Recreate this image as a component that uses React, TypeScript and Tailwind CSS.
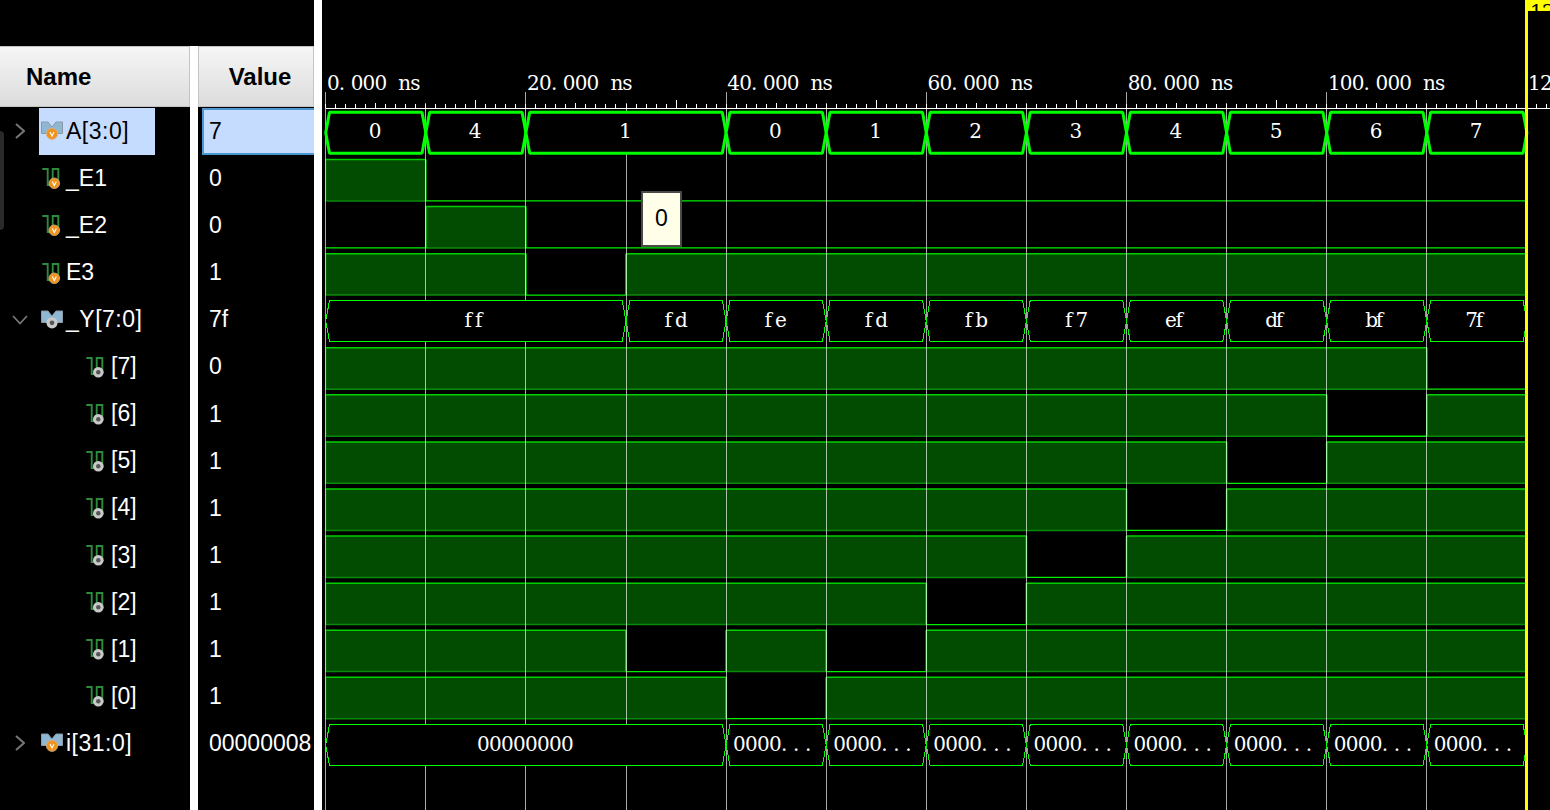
import React from "react";

const SANS = "font-['Liberation_Sans',Arial,sans-serif]";
const X = (t: number) => 325.7 + 10.01 * t;
const GX = (t: number) => Math.floor(X(t)) + 0.5;
const MONO = "'DejaVu Serif','Liberation Serif',serif";

function MonoText({ x, y, text, adv = 11.9, size = 20, center = false, fill = "#fff" }: { x: number; y: number; text: string; adv?: number; size?: number; center?: boolean; fill?: string }) {
  const start = center ? x - (text.length * adv) / 2 : x;
  const xs = Array.from(text).map((_, i) => (start + i * adv).toFixed(1)).join(" ");
  return (
    <text x={xs} y={y} fill={fill} fontSize={size} fontFamily={MONO}>
      {text}
    </text>
  );
}

function Bus({ top, h, segs, width, labelAdv = 12, crisp = false }: { top: number; h: number; segs: [number, number, string][]; width: number; labelAdv?: number; crisp?: boolean }) {
  const mid = top + h / 2;
  return (
    <g>
      {segs.map(([a, b, label]) => {
        const x0 = X(a);
        const x1 = X(b);
        const pts = [
          [x0, mid],
          [x0 + 3.8, top],
          [x1 - 3.8, top],
          [x1, mid],
          [x1 - 3.8, top + h],
          [x0 + 3.8, top + h],
        ]
          .map((p) => p.join(","))
          .join(" ");
        return (
          <g key={a}>
            <polygon
              points={pts}
              fill="#000"
              stroke="#00ff00"
              strokeWidth={width}
              strokeLinejoin="bevel"
              shapeRendering={crisp ? "crispEdges" : undefined}
            />
            <MonoText x={(x0 + x1) / 2 - 1} y={mid + 5.5} text={label} center adv={labelAdv} />
          </g>
        );
      })}
    </g>
  );
}

function Wire({ top, lows }: { top: number; lows: [number, number][] }) {
  const h = 41.4;
  const bottom = top + h;
  const isLow = (t: number) => lows.some(([a, b]) => t >= a && t < b);
  const edges = [0, ...lows.flat(), 120].filter((v, i, arr) => arr.indexOf(v) === i).sort((a, b) => a - b);
  const parts = edges.slice(0, -1).map((a, i) => ({ a, b: edges[i + 1], low: isLow(a) }));
  return (
    <g>
      {parts.map((p) =>
        p.low ? (
          <line key={p.a} x1={X(p.a)} x2={X(p.b)} y1={bottom} y2={bottom} stroke="#00f000" strokeWidth={1.3} />
        ) : (
          <g key={p.a}>
            <rect x={X(p.a)} y={top} width={X(p.b) - X(p.a)} height={h} fill="#024c02" />
            <line x1={X(p.a)} x2={X(p.b)} y1={top} y2={top} stroke="#00d000" strokeWidth={1.5} />
            <line x1={X(p.a)} x2={X(p.b)} y1={bottom} y2={bottom} stroke="#0a8a0a" strokeWidth={1.5} />
          </g>
        )
      )}
      {edges
        .filter((t) => t > 0 && t < 120)
        .map((t) => (
          <line key={t} x1={X(t)} x2={X(t)} y1={top} y2={bottom} stroke="#00f000" strokeWidth={1.5} />
        ))}
      {!isLow(0) && <line x1={X(0)} x2={X(0)} y1={top} y2={bottom} stroke="#089008" strokeWidth={1.3} />}
    </g>
  );
}

const wireRows: { idx: number; lows: [number, number][] }[] = [
  { idx: 1, lows: [[10, 120]] },
  { idx: 2, lows: [[0, 10], [20, 120]] },
  { idx: 3, lows: [[20, 30]] },
  { idx: 5, lows: [[110, 120]] },
  { idx: 6, lows: [[100, 110]] },
  { idx: 7, lows: [[90, 100]] },
  { idx: 8, lows: [[80, 90]] },
  { idx: 9, lows: [[70, 80]] },
  { idx: 10, lows: [[60, 70]] },
  { idx: 11, lows: [[30, 40], [50, 60]] },
  { idx: 12, lows: [[40, 50]] },
];

const tops = (i: number) => 159.5 + 47.07 * (i - 1);

function seq(vals: string[], from = 40): [number, number, string][] {
  return vals.map((v, i) => [from + i * 10, from + (i + 1) * 10, v]);
}

function WavePanel() {
  const ticks = Array.from({ length: 123 }, (_, i) => i);
  const grid = Array.from({ length: 13 }, (_, i) => i * 10);
  const labels = [0, 20, 40, 60, 80, 100];
  return (
    <svg viewBox="322 0 1228 810" className="h-[810px] w-[1228px] shrink-0 bg-black">
      {wireRows.map((r) => (
        <Wire key={r.idx} top={tops(r.idx)} lows={r.lows} />
      ))}
      {grid.map((t) => (
        <line
          key={t}
          x1={GX(t)}
          x2={GX(t)}
          y1={t % 20 === 0 ? 92 : 103}
          y2={810}
          stroke="#fff"
          strokeOpacity={0.66}
          strokeWidth={1}
        />
      ))}
      <Bus
        top={112.3}
        h={41}
        width={3}
        segs={[
          [0, 10, "0"],
          [10, 20, "4"],
          [20, 40, "1"],
          ...seq(["0", "1", "2", "3", "4", "5", "6", "7"]),
        ]}
      />
      <Bus
        top={300.5}
        h={41}
        width={1}
        crisp
        segs={[
          [0, 30, "ff"],
          [30, 40, "fd"],
          ...seq(["fe", "fd", "fb", "f7", "ef", "df", "bf", "7f"]),
        ]}
        labelAdv={10.5}
      />
      <Bus
        top={724.5}
        h={41}
        width={1}
        crisp
        segs={[[0, 40, "00000000"], ...seq(Array(8).fill("0000..."))]}
      />
      <line x1={325.7} x2={1550} y1={108.5} y2={108.5} stroke="#fff" strokeWidth={1} />
      {ticks.map((t) => (
        <line
          key={t}
          x1={GX(t)}
          x2={GX(t)}
          y1={t % 10 === 5 ? (t % 20 === 15 ? 100 : 103) : 104}
          y2={108}
          stroke="#fff"
          strokeWidth={1}
        />
      ))}
      {labels.map((t) => (
        <MonoText key={t} x={X(t) + 1.2} y={90} text={`${t}.000 ns`} />
      ))}
      <MonoText x={X(120) + 1.2} y={90} text="12" />
      <rect x={1525} y={0} width={3} height={810} fill="#ffff00" />
      <svg x={1526} y={0} width={24} height={11}>
        <rect x={0} y={0} width={24} height={11} fill="#ffff00" />
        <MonoText x={4} y={19} text="12" fill="#000" />
      </svg>
    </svg>
  );
}

function Dot({ kind, cx, cy, r }: { kind: "v" | "g"; cx: number; cy: number; r: number }) {
  if (kind === "v") {
    return (
      <g>
        <circle cx={cx} cy={cy} r={r} fill="#f0921e" stroke="#d9b184" strokeWidth={0.8} />
        <path d={`M${cx - 2} ${cy - 1.8} L${cx} ${cy + 2.2} L${cx + 2} ${cy - 1.8}`} fill="none" stroke="#fff" strokeWidth={1.1} />
      </g>
    );
  }
  return (
    <g>
      <circle cx={cx} cy={cy} r={r} fill="#c9c9c9" />
      <circle cx={cx} cy={cy} r={r * 0.42} fill="#555" />
    </g>
  );
}

function BusIcon({ kind }: { kind: "v" | "g" }) {
  return (
    <svg width="22" height="20" viewBox="0 0 22 20" className="shrink-0">
      <path d="M0.5 1 H7 L10.8 6 L15 1 H21.5 V12.5 H0.5 Z" fill="#8fb7d2" stroke="#8a9aa6" strokeWidth={1} />
      <Dot kind={kind} cx={11} cy={12.8} r={5.6} />
    </svg>
  );
}

function WireIcon({ kind }: { kind: "v" | "g" }) {
  return (
    <svg width="22" height="22" viewBox="0 0 22 22" className="shrink-0">
      <path d="M1.3 2 H6.7 V18 H11.7 V2 H17.3 V18" fill="none" stroke="#2e8b3c" strokeWidth={1.9} />
      <Dot kind={kind} cx={13.3} cy={16.3} r={5.3} />
    </svg>
  );
}

function Chevron({ open }: { open?: boolean }) {
  return open ? (
    <svg width="16" height="10" viewBox="0 0 16 10" className="shrink-0">
      <path d="M1 1 L8 8.5 L15 1" fill="none" stroke="#777" strokeWidth={1.8} />
    </svg>
  ) : (
    <svg width="10" height="16" viewBox="0 0 10 16" className="shrink-0">
      <path d="M1 1 L9 8 L1 15" fill="none" stroke="#777" strokeWidth={2} />
    </svg>
  );
}

const rowClass = "flex h-[47.08px] items-center";

function NameRow({ label, kind, type, chevron, selected }: { label: string; kind: "v" | "g"; type: "bus" | "wire"; chevron?: "open" | "closed"; selected?: boolean }) {
  const sub = label.startsWith("[");
  const long = label.includes(":");
  return (
    <div className={rowClass}>
      <div className={`flex shrink-0 items-center ${sub ? "w-[83px]" : "w-[39px]"} ${chevron === "open" ? "pl-[12px]" : "pl-[15px]"}`}>
        {chevron && <Chevron open={chevron === "open"} />}
      </div>
      <div className={`flex h-full items-center ${selected ? "w-[116px] bg-[#c6dcff] text-black" : "text-white"}`}>
        <div className={`ml-[2px] flex w-[22px] shrink-0 items-center justify-center ${sub ? "mr-[4px]" : "mr-[3px]"}`}>
          {type === "bus" ? <BusIcon kind={kind} /> : <WireIcon kind={kind} />}
        </div>
        <span className={`whitespace-pre leading-none ${long ? "tracking-[0.5px]" : ""}`}>{label}</span>
      </div>
    </div>
  );
}

const names: { label: string; value: string; kind: "v" | "g"; type: "bus" | "wire"; chevron?: "open" | "closed" }[] = [
  { label: "A[3:0]", value: "7", kind: "v", type: "bus", chevron: "closed" },
  { label: "_E1", value: "0", kind: "v", type: "wire" },
  { label: "_E2", value: "0", kind: "v", type: "wire" },
  { label: "E3", value: "1", kind: "v", type: "wire" },
  { label: "_Y[7:0]", value: "7f", kind: "g", type: "bus", chevron: "open" },
  { label: "[7]", value: "0", kind: "g", type: "wire" },
  { label: "[6]", value: "1", kind: "g", type: "wire" },
  { label: "[5]", value: "1", kind: "g", type: "wire" },
  { label: "[4]", value: "1", kind: "g", type: "wire" },
  { label: "[3]", value: "1", kind: "g", type: "wire" },
  { label: "[2]", value: "1", kind: "g", type: "wire" },
  { label: "[1]", value: "1", kind: "g", type: "wire" },
  { label: "[0]", value: "1", kind: "g", type: "wire" },
  { label: "i[31:0]", value: "00000008", kind: "v", type: "bus", chevron: "closed" },
];

const headerClass =
  "flex h-[61px] items-center border border-[#c4c4c4] bg-gradient-to-b from-[#f6f6f6] to-[#dcdcdc] pt-[1px] text-[24px] font-bold text-black";

export default function App() {
  return (
    <div className={`relative flex h-[810px] w-[1550px] overflow-hidden bg-black text-[23px] ${SANS}`}>
      <div className="w-[190px] shrink-0 pt-[46px]">
        <div className={`${headerClass} border-l-0 pl-[26px]`}>Name</div>
        <div className="pt-[0.8px]">
          {names.map((n, i) => (
            <NameRow key={n.label} label={n.label} kind={n.kind} type={n.type} chevron={n.chevron} selected={i === 0} />
          ))}
        </div>
      </div>
      <div className="mt-[46px] w-[8px] shrink-0 bg-white" />
      <div className="w-[116px] shrink-0 pt-[46px]">
        <div className={`${headerClass} justify-center pl-[8px]`}>Value</div>
        <div className="pt-[0.8px]">
          {names.map((n, i) => (
            <div key={n.label} className={rowClass}>
              {i === 0 ? (
                <div className="ml-[4px] flex h-full flex-1 items-center border-2 border-r-0 border-[#4a96d0] bg-[#c6dcff] pl-[5px] text-black">
                  {n.value}
                </div>
              ) : (
                <span className="pl-[11px] text-white">{n.value}</span>
              )}
            </div>
          ))}
        </div>
      </div>
      <div className="w-[8px] shrink-0 bg-white" />
      <WavePanel />
      <div className="absolute left-0 top-[131px] h-[99px] w-[4px] rounded-r-[4px] bg-[#2a2a2a]" />
      <div className="absolute left-[641px] top-[191px] flex h-[56px] w-[41px] items-center justify-center border-2 border-[#4a4a4a] bg-[#fffee8] pb-[1px] text-[23px] text-black">
        0
      </div>
    </div>
  );
}
